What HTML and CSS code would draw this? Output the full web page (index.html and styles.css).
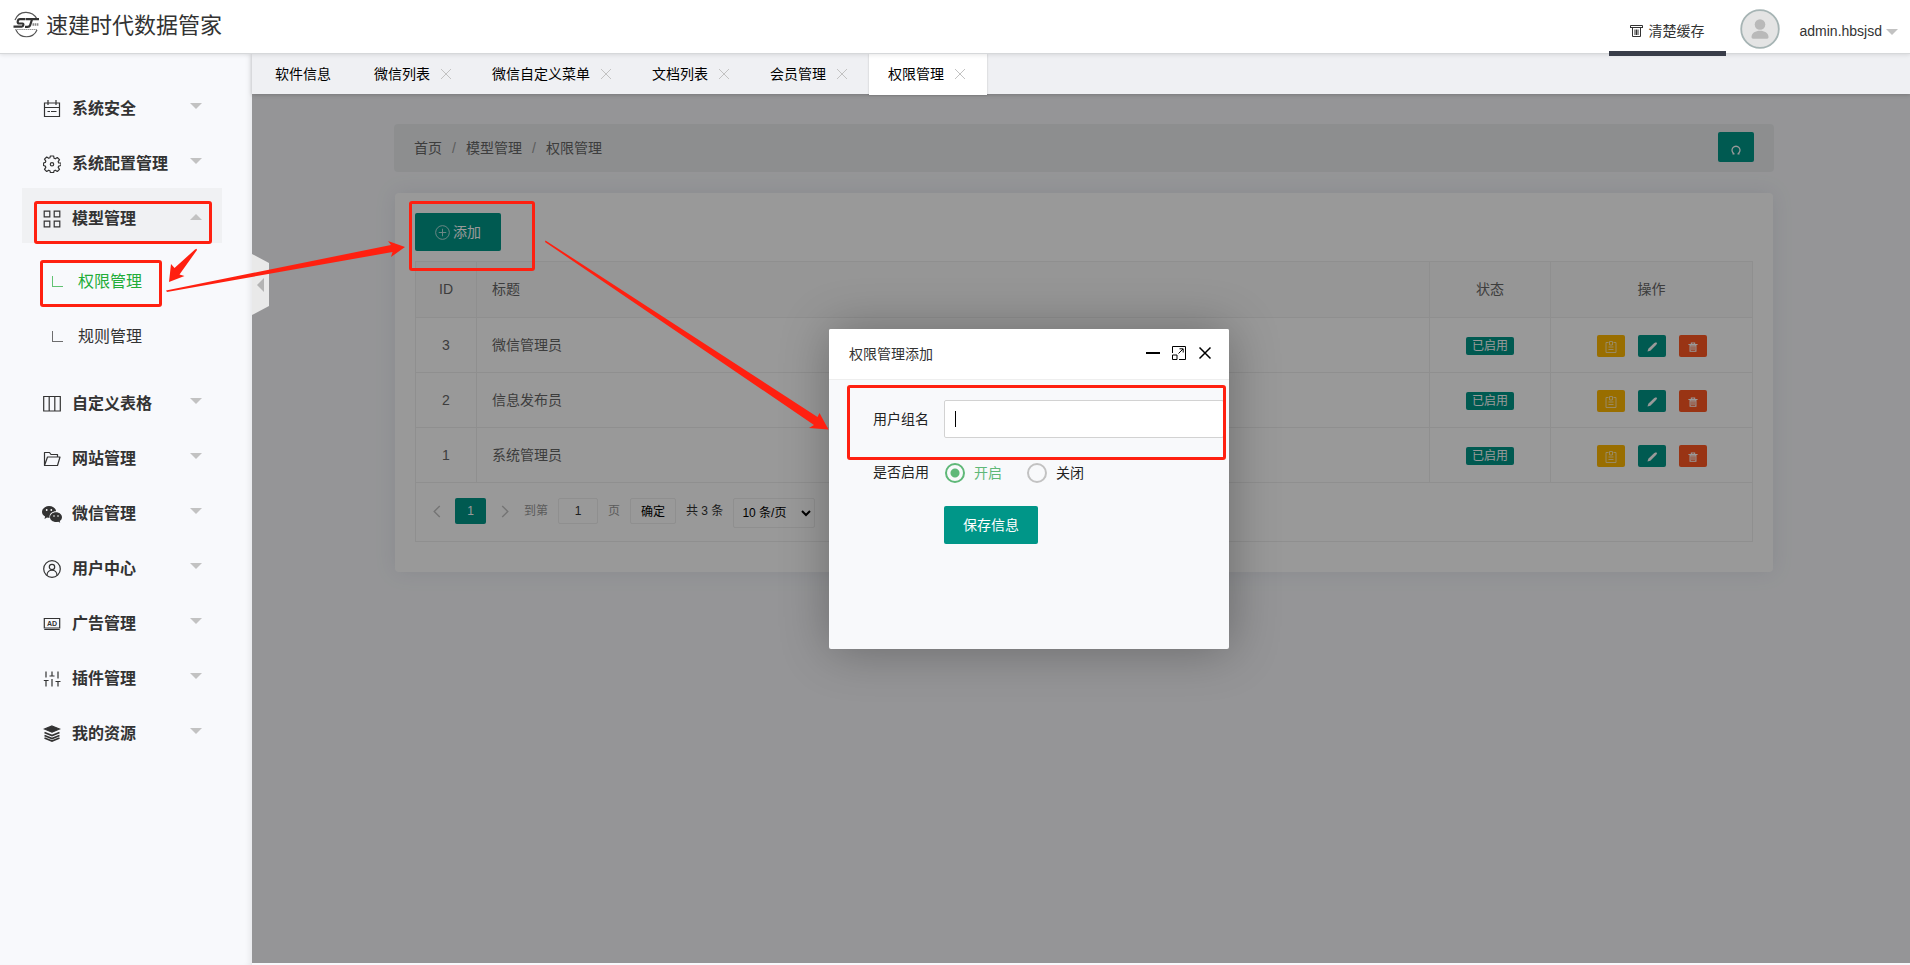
FILE: index.html
```html
<!DOCTYPE html>
<html lang="zh-CN">
<head>
<meta charset="utf-8">
<title>速建时代数据管家</title>
<link rel="stylesheet" href="styles.css">
</head>
<body>
<svg class="sprite" aria-hidden="true">
  <symbol id="i-x" viewBox="0 0 12 12"><path d="M1 1l10 10M11 1L1 11"/></symbol>
  <symbol id="i-note" viewBox="0 0 12 12"><path d="M3.500 1.500H1v10h10v-10H8.500M4.500.5h3V4h-3zM3.500 6h5M3.500 8.500h5"/></symbol>
  <symbol id="i-pen" viewBox="0 0 12 12"><path class="solid" d="M1.500 10.500l.8-2.800 6-5.600 1.800-.9 1 1-1 1.800-5.800 5.700z"/></symbol>
  <symbol id="i-bin" viewBox="0 0 12 12"><path d="M.5 3h11M4 2.500V1.200h4v1.300M2.500 3.500v7.500h7V3.500M4.800 4.500v5M7.200 4.500v5M2.500 4.500h7" stroke-width="1.300"/></symbol>
</svg>
<div class="app">
  <header class="header">
    <h1 class="brand">
      <svg class="brand-logo" viewBox="0 0 28 28" aria-hidden="true">
        <path d="M3 9C7-1 20-1 25 8M4 19c4 9 17 9 21 0" fill="none" stroke="#555" stroke-width="1.200"/>
        <path d="M13.500 8.200H8c-2.500 0-3.300 4.300-.8 4.300h3.300c1.500 0 1 3.200-.7 3.200H1.500" fill="none" stroke="#333" stroke-width="2.200"/>
        <path d="M14 8.200h13M20 8.500l-2 6c-.4 1-1 1.300-2.500 1.300H13" fill="none" stroke="#333" stroke-width="2.200"/>
        <path d="M20.500 13.500h6.500" stroke="#888" stroke-width="2.500" stroke-dasharray="1.500 .6"/>
        <path d="M3 18.500h22" stroke="#999" stroke-width="1.200" stroke-dasharray="1.600 .5"/>
      </svg>
      <span>速建时代数据管家</span>
    </h1>
    <div class="header-tools">
      <a class="clear-cache" href="#">
        <svg class="bin-icon" viewBox="0 0 13 12" aria-hidden="true"><path d="M.5 3V.5h12V3M.5 2.500h12M2.500 3v8.500h8V3M5 4.500V10M6.500 4.500V10M8 4.500V10"/></svg>
        <span>清楚缓存</span>
      </a>
      <a class="user" href="#">
        <svg class="avatar" viewBox="0 0 40 40" stroke="none" aria-hidden="true">
          <circle cx="20" cy="20" r="18.800" fill="#e4e4e4" stroke="#a6b4b4" stroke-width="1.800"/>
          <circle cx="20" cy="15.500" r="5.300" fill="#b9b9b9" stroke="none"/>
          <path d="M11.500 28c0-8.500 17-8.500 17 0 0 1-.5 1.700-1.500 1.700H13c-1 0-1.500-.7-1.500-1.700z" fill="#b9b9b9" stroke="none"/>
        </svg>
        <span>admin.hbsjsd</span>
        <i class="caret"></i>
      </a>
    </div>
  </header>

  <div class="body">
    <aside class="sidebar">
      <nav class="menu">
        <a class="menu-item" href="#">
          <svg class="menu-icon" viewBox="0 0 18 18"><path d="M1.500 3h15v13.500h-15zM5 0v5M13 0v5M1.500 7.500h15M4.500 11.500h2.500M8 11.500h5.500"/></svg>
          <span>系统安全</span><i class="caret"></i></a>
        <a class="menu-item" href="#">
          <svg class="menu-icon" viewBox="0 0 18 18"><path stroke-linejoin="round" d="M7.400 1h3.200l.5 2.300 1.200.5 2-1.300 2.200 2.200-1.300 2 .5 1.200L18 8v2.500l-2.300.6-.5 1.200 1.300 2-2.200 2.200-2-1.300-1.200.5-.5 2h-3.200l-.5-2-1.200-.5-2 1.300-2.200-2.200 1.300-2-.5-1.200L.5 10.500V8l1.800-.6.5-1.200-1.300-2 2.200-2.200 2 1.300 1.200-.5z"/><circle cx="9" cy="9.300" r="1.700"/></svg>
          <span>系统配置管理</span><i class="caret"></i></a>
        <a class="menu-item open" href="#">
          <svg class="menu-icon" viewBox="0 0 18 18"><path d="M1.200 1.200h5.600v5.600H1.200zM11.200 1.200h5.600v5.600h-5.600zM1.200 11.200h5.600v5.600H1.200zM11.200 11.200h5.600v5.600h-5.600z"/></svg>
          <span>模型管理</span><i class="caret"></i></a>
        <div class="submenu">
          <a class="sub-item current" href="#"><i class="branch"></i><span>权限管理</span></a>
          <a class="sub-item" href="#"><i class="branch"></i><span>规则管理</span></a>
        </div>
        <a class="menu-item" href="#">
          <svg class="menu-icon" viewBox="0 0 18 18"><path d="M.7 1.500h16.600v14.500H.7zM6.200 1.500V16M11.800 1.500V16"/></svg>
          <span>自定义表格</span><i class="caret"></i></a>
        <a class="menu-item" href="#">
          <svg class="menu-icon" viewBox="0 0 18 18"><path stroke-linejoin="round" d="M1.500 15.500V2.500h5l1.500 2h6.500V7M1.500 15.500L4.500 7h12.500l-2.500 8.500z"/></svg>
          <span>网站管理</span><i class="caret"></i></a>
        <a class="menu-item" href="#">
          <svg class="menu-icon wide" viewBox="0 0 20 18"><g fill="#333" stroke="none"><path d="M7 1c4 0 7 2.500 7 5.200-4 0-7.300 3-6.300 6.600-1 0-2 0-2.700-.3L2.500 14l.6-2.500C1 10.300 0 8.700 0 7c0-3.300 3.200-6 7-6z"/><path d="M14 7.300c3.300 0 6 2.200 6 5 0 1.500-.9 2.900-2.200 3.800l.4 1.700-2-1c-4.500 1-8.200-1.400-8.200-4.500 0-2.800 2.700-5 6-5z"/></g><g fill="#fff" stroke="none"><circle cx="4.700" cy="5" r=".9"/><circle cx="9.300" cy="5" r=".9"/><circle cx="12" cy="11" r=".8"/><circle cx="16" cy="11" r=".8"/></g></svg>
          <span>微信管理</span><i class="caret"></i></a>
        <a class="menu-item" href="#">
          <svg class="menu-icon" viewBox="0 0 18 18"><circle cx="9" cy="9" r="8.300"/><circle cx="9" cy="7" r="2.700"/><path d="M4 15.500c0-7 10-7 10 0"/></svg>
          <span>用户中心</span><i class="caret"></i></a>
        <a class="menu-item" href="#">
          <svg class="menu-icon" viewBox="0 0 18 18"><path d="M1.300 3.500h15.400v9.500H1.300zM1.300 14.500h15.400"/><text x="9" y="11" text-anchor="middle" class="ad-text">AD</text></svg>
          <span>广告管理</span><i class="caret"></i></a>
        <a class="menu-item" href="#">
          <svg class="menu-icon" viewBox="0 0 18 18"><path d="M3 1.500v6M3 10.500v6M.8 10.500h4.800M9 1.500v4M6.500 6h5M9 9v7.500M15 1.500v7M15 11.500v5M12.500 11.500h5"/></svg>
          <span>插件管理</span><i class="caret"></i></a>
        <a class="menu-item" href="#">
          <svg class="menu-icon" viewBox="0 0 18 18"><path d="M9 1l7.500 3L9 7.200 1.500 4z" fill="#333"/><path d="M1.500 7.500L9 10.500l7.500-3M1.500 10.500L9 13.500l7.500-3M1.500 13L9 16l7.500-3" stroke-width="1.700"/></svg>
          <span>我的资源</span><i class="caret"></i></a>
      </nav>
    </aside>

    <main class="main">
      <nav class="tabs">
        <a class="tab home" href="#">软件信息</a>
        <a class="tab" href="#">微信列表<svg class="tab-close"><use href="#i-x"/></svg></a>
        <a class="tab" href="#">微信自定义菜单<svg class="tab-close"><use href="#i-x"/></svg></a>
        <a class="tab" href="#">文档列表<svg class="tab-close"><use href="#i-x"/></svg></a>
        <a class="tab" href="#">会员管理<svg class="tab-close"><use href="#i-x"/></svg></a>
        <a class="tab active" href="#">权限管理<svg class="tab-close"><use href="#i-x"/></svg></a>
      </nav>

      <div class="stage">
        <div class="crumbs">
          <div class="trail"><a href="#">首页</a><i>/</i><a href="#">模型管理</a><i>/</i><span>权限管理</span></div>
          <button class="btn refresh" type="button" aria-label="刷新"><svg viewBox="0 0 10 10"><path d="M3 8.700a4 4 0 1 1 4 0M1.500 8.800H3.500M6.500 8.800h2"/></svg></button>
        </div>

        <section class="card">
          <button class="btn add" type="button"><svg viewBox="0 0 16 16"><circle cx="8" cy="8" r="7.300"/><path d="M8 4v8M4 8h8"/></svg><span>添加</span></button>
          <table class="grid">
            <thead>
              <tr><th class="c-id">ID</th><th class="c-title">标题</th><th class="c-state">状态</th><th class="c-op">操作</th></tr>
            </thead>
            <tbody>
              <tr><td class="c-id">3</td><td class="c-title">微信管理员</td><td class="c-state"><span class="badge">已启用</span></td>
                <td class="c-op"><div class="ops"><button type="button" class="op note" aria-label="详情"><svg><use href="#i-note"/></svg></button><button type="button" class="op edit" aria-label="编辑"><svg><use href="#i-pen"/></svg></button><button type="button" class="op del" aria-label="删除"><svg><use href="#i-bin"/></svg></button></div></td></tr>
              <tr><td class="c-id">2</td><td class="c-title">信息发布员</td><td class="c-state"><span class="badge">已启用</span></td>
                <td class="c-op"><div class="ops"><button type="button" class="op note" aria-label="详情"><svg><use href="#i-note"/></svg></button><button type="button" class="op edit" aria-label="编辑"><svg><use href="#i-pen"/></svg></button><button type="button" class="op del" aria-label="删除"><svg><use href="#i-bin"/></svg></button></div></td></tr>
              <tr><td class="c-id">1</td><td class="c-title">系统管理员</td><td class="c-state"><span class="badge">已启用</span></td>
                <td class="c-op"><div class="ops"><button type="button" class="op note" aria-label="详情"><svg><use href="#i-note"/></svg></button><button type="button" class="op edit" aria-label="编辑"><svg><use href="#i-pen"/></svg></button><button type="button" class="op del" aria-label="删除"><svg><use href="#i-bin"/></svg></button></div></td></tr>
            </tbody>
          </table>
          <div class="pager">
            <button type="button" class="page-step" aria-label="上一页"><svg viewBox="0 0 8 14"><path d="M7 1L1 7l6 6"/></svg></button>
            <span class="page-now">1</span>
            <button type="button" class="page-step next" aria-label="下一页"><svg viewBox="0 0 8 14"><path d="M1 1l6 6-6 6"/></svg></button>
            <label class="page-goto" for="page-no">到第</label>
            <input class="page-input" id="page-no" type="text" value="1">
            <span class="page-unit">页</span>
            <button type="button" class="page-ok">确定</button>
            <span class="page-total">共 3 条</span>
            <select class="page-size" aria-label="每页条数"><option>10 条/页</option></select>
          </div>
        </section>

        <div class="shade"></div>
        <button class="fold" type="button" aria-label="收起菜单"></button>

        <section class="dialog" role="dialog" aria-labelledby="dialog-title">
          <header class="dialog-head">
            <h2 id="dialog-title">权限管理添加</h2>
            <div class="dialog-tools">
              <button type="button" aria-label="最小化"><svg viewBox="0 0 14 14"><path d="M0 7h14" stroke-width="2"/></svg></button>
              <button type="button" aria-label="最大化"><svg viewBox="0 0 14 14"><path d="M.5 7V.5h13v13H7M.5 9h4.500v4.500H.5zM6.500 7.500L11 3M7.500 2.800h3.700v3.700"/></svg></button>
              <button type="button" aria-label="关闭"><svg viewBox="0 0 14 14"><path d="M1.500 1.500l11 11M12.500 1.500l-11 11" stroke-width="1.500"/></svg></button>
            </div>
          </header>
          <form class="form">
            <label class="form-label" for="group-name">用户组名</label>
            <div class="field"><input class="text-input" id="group-name" type="text"><i class="text-caret"></i></div>
            <span class="form-label" id="enable-label">是否启用</span>
            <div class="radios" role="radiogroup" aria-labelledby="enable-label">
              <label class="radio"><input type="radio" name="enable" checked><span>开启</span></label>
              <label class="radio"><input type="radio" name="enable"><span>关闭</span></label>
            </div>
            <button class="btn save" type="button">保存信息</button>
          </form>
        </section>
      </div>
    </main>
  </div>

  <svg class="marks" viewBox="0 0 1910 965" preserveAspectRatio="xMinYMin meet" aria-hidden="true">
    <g fill="none" stroke="#ff2010" stroke-width="3">
      <rect x="35.500" y="202.500" width="175" height="40" rx="1.500"/>
      <rect x="41.500" y="261.500" width="119" height="44" rx="1.500"/>
      <rect x="410.500" y="202.500" width="123" height="67" rx="1.500"/>
      <rect x="848.500" y="386.500" width="376" height="72" rx="1.500"/>
    </g>
    <g fill="#ff2010" stroke="none">
      <path d="M195 249.500L196.500 248.800 197 250 179.500 274.500 184.500 276 169 282 171 264 174.500 268z"/>
      <path d="M166 290.500L391 245 388 241 405 247 391 257 392.500 252 167 292z"/>
      <path d="M545.500 240.500L817.500 417 819.500 413 828.500 429.500 809 428 814 425 545 242z"/>
    </g>
  </svg>
</div>
</body>
</html>
```
FILE: styles.css
```css
* { box-sizing: border-box; }

body {
  margin: 0;
  background: #f8f9fc;
  color: #333;
  font: 14px/20px "Liberation Sans", "Noto Sans CJK SC", sans-serif;
}

a { color: inherit; text-decoration: none; }
h1, h2 { margin: 0; font-weight: 400; }
button, input, select { font: inherit; margin: 0; }
button { padding: 0; border: 0; background: none; cursor: pointer; }
svg { fill: none; stroke: currentColor; flex: none; }
.sprite { display: none; }
.solid { fill: currentColor; stroke: none; }

.app { position: relative; display: flex; flex-direction: column; min-height: 100vh; overflow: hidden; }

.caret { border: 6px solid transparent; border-top-color: #c2c2c2; border-bottom-width: 0; }

/* header */
.header {
  position: relative;
  z-index: 3;
  display: flex;
  justify-content: space-between;
  height: 54px;
  background: #fff;
  border-bottom: 1px solid #d6d8da;
  box-shadow: 0 1px 4px rgba(0, 0, 0, .1);
}
.brand { display: flex; align-items: flex-start; gap: 6px; padding: 11px 0 0 12px; font-size: 22px; line-height: 30px; }
.brand-logo { width: 28px; height: 28px; }
.header-tools { display: flex; }
.clear-cache { display: flex; align-items: center; gap: 6px; height: 56px; padding: 10px 21px 0; border-bottom: 5px solid #393d49; }
.bin-icon { width: 13px; height: 12px; }
.user { display: flex; align-items: center; padding: 0 12px 0 14px; height: 58px; }
.avatar { width: 40px; height: 40px; margin-right: 20px; }
.user span { padding-top: 4px; margin-right: 4px; }
.user .caret { margin-top: 6px; }

/* sidebar */
.body { flex: 1; display: flex; }
.sidebar { width: 252px; flex: none; padding: 24px 30px 24px 22px; box-shadow: inset -6px 0 6px -4px rgba(0, 0, 0, .08); }
.menu-item { display: flex; align-items: center; height: 55px; padding: 6px 20px 0 21px; font-size: 16px; font-weight: 700; line-height: 24px; }
.menu-item span { margin-left: 11px; flex: 1; }
.menu-item .caret { margin-bottom: 6px; }
.menu-item.open { background: #f0f1f3; }
.menu-item.open .caret { border-width: 0 6px 6px; border-bottom-color: #c2c2c2; margin-bottom: 4px; }
.menu-icon { width: 18px; height: 18px; stroke-width: 1.2; }
.menu-icon.wide { width: 20px; margin: 0 -1px; }
.ad-text { font-size: 7px; font-weight: 700; fill: #333; stroke: none; }
.submenu { padding: 11px 0 9px; }
.sub-item { display: flex; align-items: center; gap: 15px; height: 55px; padding-left: 30px; font-size: 16px; line-height: 24px; }
.sub-item.current { color: #22ac38; }
.branch { width: 11px; height: 11px; border: solid; border-width: 0 0 1px 1px; opacity: .7; }

/* tabs */
.main { flex: 1; display: flex; flex-direction: column; min-width: 0; padding-bottom: 2px; }
.tabs { position: relative; z-index: 2; display: flex; height: 40px; padding-left: 5px; background: #eff0f3; box-shadow: 0 1px 4px rgba(0, 0, 0, .2); }
.tab { display: flex; align-items: center; gap: 10px; height: 41px; padding: 0 21px 2px 19px; color: #000; }
.tab.home { padding: 0 24px 2px 18px; }
.tab.active { background: #fff; box-shadow: 0 0 2px rgba(0, 0, 0, .2); }
.tab-close { width: 12px; height: 12px; color: #c2c2c2; }

/* content */
.stage { position: relative; flex: 1; padding: 30px 136px 30px 142px; background: #f8f9fc; color: #666; }
.shade { position: absolute; inset: 0; background: rgba(0, 0, 0, .4); }
.btn { background: #009688; color: #fff; border-radius: 2px; }
.crumbs { display: flex; align-items: center; justify-content: space-between; height: 48px; padding: 0 20px; background: #ebedef; border-radius: 4px; }
.trail { display: flex; }
.trail i { width: 24px; text-align: center; font-style: normal; color: #999; }
.refresh { display: flex; align-items: center; justify-content: center; width: 36px; height: 30px; padding-top: 6px; margin-top: -2px; }
.refresh svg { width: 10px; height: 10px; stroke-width: 1.3; }
.card { margin: 21px 1px 0; padding: 20px 20px 30px; background: #fff; border-radius: 4px; box-shadow: 0 0 20px rgba(120, 130, 160, .15); }
.add { display: flex; align-items: center; justify-content: center; gap: 3px; width: 86px; height: 38px; }
.add svg { width: 15px; height: 15px; opacity: .75; }

.grid { width: 100%; margin-top: 10px; border-collapse: collapse; table-layout: fixed; }
.grid th, .grid td { height: 55px; padding: 0 15px; border: 1px solid #eee; font-weight: 400; text-align: left; }
.grid th { height: 56px; padding-bottom: 2px; background: #fafafa; }
.grid .c-id { width: 61px; text-align: center; }
.grid .c-state { width: 121px; text-align: center; }
.grid .c-op { width: 202px; text-align: center; }
.badge { display: inline-block; height: 18px; padding: 0 6px; border-radius: 2px; background: #009688; color: #fff; font-size: 12px; line-height: 18px; }
.ops { display: flex; justify-content: center; gap: 13px; padding-top: 2px; }
.op { display: flex; align-items: center; justify-content: center; width: 28px; height: 22px; padding-top: 2px; border-radius: 2px; color: #fff; }
.op svg { width: 12px; height: 12px; }
.op.del svg { width: 10px; height: 10px; }
.note { background: #ffb800; }
.note svg { opacity: .65; }
.edit { background: #009688; }
.del { background: #ff5722; }

.pager { display: flex; align-items: flex-start; gap: 10px; height: 59px; padding: 15px 14px 0; border: 1px solid #eee; border-top: 0; font-size: 12px; line-height: 26px; }
.page-step { display: flex; align-items: center; justify-content: center; width: 14px; height: 26px; color: #c2c2c2; }
.page-step.next { margin-left: 2px; }
.page-step svg { width: 8px; height: 13px; stroke-width: 1.5; }
.page-now { width: 31px; margin-left: 1px; border-radius: 2px; background: #009688; color: #fff; text-align: center; }
.page-goto { margin-left: 2px; color: #999; }
.page-input { width: 40px; height: 26px; padding: 0; border: 1px solid #eee; border-radius: 2px; background: #fff; color: #333; text-align: center; }
.page-unit { color: #999; }
.page-ok { width: 46px; height: 26px; border: 1px solid #eee; border-radius: 2px; color: #000; }
.page-total { color: #333; }
.page-size { width: 82px; height: 30px; padding: 0 4px; border: 1px solid #eee; border-radius: 2px; background: #fff; color: #000; }

/* fold handle on the sidebar edge */
.fold { position: absolute; left: 0; top: 160px; display: flex; align-items: center; width: 17px; height: 61px; padding-left: 5px; background: #e9e9e9; clip-path: polygon(0 0, 100% 9px, 100% 52px, 0 100%); }
.fold::before { content: ""; border: solid transparent; border-width: 7px 7px 7px 0; border-right-color: #b4b4b4; }

/* dialog */
.dialog { position: absolute; left: 577px; top: 235px; width: 400px; height: 320px; overflow: hidden; border-radius: 2px; background: #f8f9fb; color: #333; box-shadow: 1px 1px 50px rgba(0, 0, 0, .3); }
.dialog-head { display: flex; align-items: center; justify-content: space-between; height: 51px; padding: 0 17px 0 20px; border-bottom: 1px solid #eee; background: #fff; }
.dialog-head h2 { font-size: 14px; line-height: 20px; }
.dialog-tools { display: flex; gap: 12px; padding-bottom: 2px; color: #2e2d3c; }
.dialog-tools button { width: 14px; height: 14px; }
.dialog-tools svg { display: block; width: 14px; height: 14px; }
.form { display: grid; grid-template-columns: 100px 280px; column-gap: 15px; align-items: center; padding-top: 20px; color: #222; }
.form-label { text-align: right; }
.field { position: relative; }
.text-input { display: block; width: 100%; height: 38px; padding: 0 10px; border: 1px solid #d2d2d2; border-radius: 2px; background: #fff; outline: 0; }
.text-caret { position: absolute; left: 11px; top: 11px; width: 1px; height: 16px; background: #000; }
.radios { display: flex; gap: 24px; padding: 24px 0 23px; }
.radio { display: flex; align-items: center; gap: 9px; height: 21px; padding-left: 1px; }
.radio input { appearance: none; width: 20px; height: 20px; border: 2px solid #c2c2c2; border-radius: 50%; }
.radio input:checked { border-color: #5fb878; background: radial-gradient(#5fb878 4px, transparent 5px); }
.radio input:checked + span { color: #5fb878; }
.save { grid-column: 2; width: 94px; height: 38px; }

.marks { position: absolute; left: 0; top: 0; z-index: 5; width: 1910px; height: 965px; pointer-events: none; }
```
